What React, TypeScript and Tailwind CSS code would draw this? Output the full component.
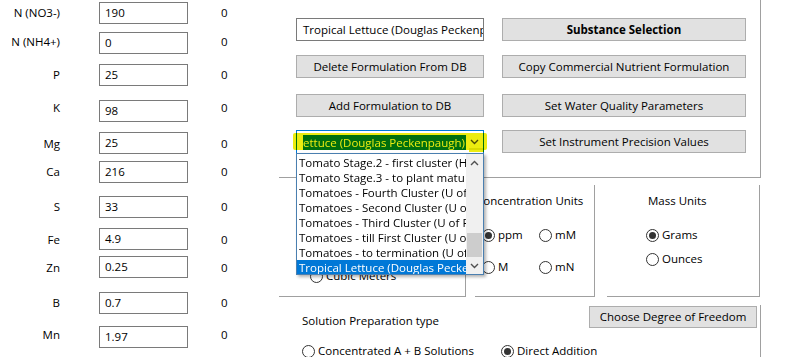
import React from "react";

const nutrients = [
  { label: "N (NO3-)", value: "190", gap: "mt-[2px]", shift: "" },
  { label: "N (NH4+)", value: "0", gap: "mt-[8px]", shift: "-mt-[2px]" },
  { label: "P", value: "25", gap: "mt-[10px]", shift: "" },
  { label: "K", value: "98", gap: "mt-[14px]", shift: "-mt-[6px]" },
  { label: "Mg", value: "25", gap: "mt-[10px]", shift: "mt-[2px]" },
  { label: "Ca", value: "216", gap: "mt-[7px]", shift: "" },
  { label: "S", value: "33", gap: "mt-[13px]", shift: "" },
  { label: "Fe", value: "4.9", gap: "mt-[10px]", shift: "mt-[2px]" },
  { label: "Zn", value: "0.25", gap: "mt-[6px]", shift: "mt-[2px]" },
  { label: "B", value: "0.7", gap: "mt-[14px]", shift: "" },
  { label: "Mn", value: "1.97", gap: "mt-[12px]", shift: "-mt-[4px]" },
];

const formulations = [
  "Tomato Stage.2 - first cluster (H",
  "Tomato Stage.3 - to plant matu",
  "Tomatoes - Fourth Cluster (U of",
  "Tomatoes - Second Cluster (U o",
  "Tomatoes - Third Cluster (U of F",
  "Tomatoes - till First Cluster (U o",
  "Tomatoes - to termination (U of",
  "Tropical Lettuce (Douglas Pecke",
];

const Chevron = ({ up = false }: { up?: boolean }) => (
  <svg width="9" height="6" viewBox="0 0 9 6" className="block">
    <path
      d={up ? "M1 5 L4.5 1.5 L8 5" : "M1 1 L4.5 4.5 L8 1"}
      fill="none"
      stroke="#505050"
      strokeWidth="1.4"
    />
  </svg>
);

const Radio = ({ label, checked = false }: { label: string; checked?: boolean }) => (
  <div className="flex items-center leading-[16px]">
    <span className="w-[13px] h-[13px] rounded-full border border-[#333] bg-white flex items-center justify-center shrink-0">
      {checked && <span className="w-[7px] h-[7px] rounded-full bg-[#333]" />}
    </span>
    <span className="ml-[3px] whitespace-nowrap">{label}</span>
  </div>
);

const Button = ({ children, bold = false }: { children: React.ReactNode; bold?: boolean }) => (
  <div
    className={
      "h-[23px] w-full bg-[#e1e1e1] border border-[#adadad] flex items-center justify-center whitespace-nowrap" +
      (bold ? " font-bold" : "")
    }
  >
    {children}
  </div>
);

const App = () => {
  return (
    <div className="w-[787px] h-[357px] bg-white text-black text-[11.5px] font-['Open_Sans','Noto_Sans',sans-serif] flex overflow-hidden">
      {/* Nutrient values */}
      <div className="w-[279px] shrink-0 flex flex-col">
        {nutrients.map((n) => (
          <div key={n.label} className={"flex items-center h-[22px] " + n.gap}>
            <div className={"w-[60px] text-right whitespace-nowrap " + n.shift}>{n.label}</div>
            <div className="ml-[39px] w-[89px] h-[22px] border border-[#7a7a7a] flex items-center pl-[5px]">
              {n.value}
            </div>
            <div className={"ml-[33px] " + n.shift}>0</div>
          </div>
        ))}
      </div>

      {/* Right side */}
      <div className="flex-1 flex flex-col">
        {/* Formulation group */}
        <div className="w-[482px] h-[178px] shrink-0 border-r border-b border-[#a0a0a0] flex gap-[18px] pl-[17px] pt-[18px]">
          <div className="w-[188px] flex flex-col">
            <div className="h-[23px] border border-[#7a7a7a] flex items-center pl-[6px] overflow-hidden whitespace-nowrap">
              Tropical Lettuce (Douglas Peckenp
            </div>
            <div className="mt-[14px]">
              <Button>Delete Formulation From DB</Button>
            </div>
            <div className="mt-[16px]">
              <Button>Add Formulation to DB</Button>
            </div>
            {/* Combo box with open list */}
            <div className="mt-[13px] relative z-10">
              <div className="h-[24px] border border-[#0078d7] bg-white flex">
                <div className="flex-1 overflow-hidden flex items-center pl-[6px]">
                  <span className="bg-[#0078d7] text-white whitespace-nowrap leading-[15px] pr-[1px]">
                    ettuce (Douglas Peckenpaugh)
                  </span>
                </div>
                <div className="w-[17px] flex items-center justify-center">
                  <Chevron />
                </div>
              </div>
              <div className="absolute left-[-3px] top-[3px] w-[194px] h-[17px] bg-[#ecec10] mix-blend-multiply rounded-[2px]" />
              <div className="absolute left-[173px] top-[18px] w-[15px] h-[4px] bg-[#ecec10] mix-blend-multiply" />
              <div className="absolute left-0 top-[23px] w-[188px] h-[122px] border border-[#4a7fb0] bg-white flex shadow-[2px_2px_3px_rgba(0,0,0,0.3)]">
                <div className="flex-1 overflow-hidden pt-[1px]">
                  {formulations.map((f, i) => (
                    <div
                      key={f}
                      className={
                        "h-[15px] leading-[15px] pl-[2px] whitespace-nowrap overflow-hidden " +
                        (i === formulations.length - 1 ? "bg-[#0078d7] text-white" : "text-black")
                      }
                    >
                      {f}
                    </div>
                  ))}
                </div>
                <div className="w-[17px] bg-[#f0f0f0] flex flex-col items-center">
                  <div className="h-[17px] flex items-center justify-center">
                    <Chevron up />
                  </div>
                  <div className="flex-1 w-full flex flex-col">
                    <div className="mt-[62px] h-[24px] mx-[1px] bg-[#cdcdcd]" />
                  </div>
                  <div className="h-[17px] flex items-center justify-center">
                    <Chevron />
                  </div>
                </div>
              </div>
            </div>
          </div>
          <div className="w-[244px] flex flex-col">
            <Button bold>Substance Selection</Button>
            <div className="mt-[14px]">
              <Button>Copy Commercial Nutrient Formulation</Button>
            </div>
            <div className="mt-[16px]">
              <Button>Set Water Quality Parameters</Button>
            </div>
            <div className="mt-[13px]">
              <Button>Set Instrument Precision Values</Button>
            </div>
          </div>
        </div>

        {/* Units groups */}
        <div className="mt-[7px] flex h-[112px] shrink-0">
          {/* volume units, mostly covered by the open list */}
          <div className="w-[187px] border-r border-b border-[#a0a0a0] flex flex-col pl-[31px] pt-[83px]">
            <Radio label="Cubic Meters" />
          </div>
          <div className="ml-[9px] w-[120px] border-r border-b border-[#a0a0a0] flex flex-col">
            <div className="pt-[8px] pl-[1px] leading-[16px] whitespace-nowrap">Concentration Units</div>
            <div className="mt-[18px] pl-[7px] flex">
              <div className="w-[57px]">
                <Radio label="ppm" checked />
              </div>
              <Radio label="mM" />
            </div>
            <div className="mt-[16px] pl-[7px] flex">
              <div className="w-[57px]">
                <Radio label="M" />
              </div>
              <Radio label="mN" />
            </div>
          </div>
          <div className="ml-[12px] w-[153px] border-r border-b border-[#a0a0a0] flex flex-col">
            <div className="pt-[8px] pl-[41px] leading-[16px]">Mass Units</div>
            <div className="mt-[18px] pl-[39px]">
              <Radio label="Grams" checked />
            </div>
            <div className="mt-[8px] pl-[39px]">
              <Radio label="Ounces" />
            </div>
          </div>
        </div>

        {/* Solution preparation */}
        <div className="mt-[8px] w-[482px] flex-1 border-r border-[#a0a0a0] flex flex-col">
          <div className="flex items-start">
            <div className="pl-[23px] pt-[8px] leading-[16px]">Solution Preparation type</div>
            <div className="ml-auto mr-[3px] mt-[1px] w-[168px]">
              <div className="h-[22px] bg-[#e1e1e1] border border-[#adadad] flex items-center justify-center whitespace-nowrap">
                Choose Degree of Freedom
              </div>
            </div>
          </div>
          <div className="mt-[14px] pl-[23px] flex">
            <div className="w-[199px]">
              <Radio label="Concentrated A + B Solutions" />
            </div>
            <Radio label="Direct Addition" checked />
          </div>
        </div>
      </div>
    </div>
  );
};

export default App;
